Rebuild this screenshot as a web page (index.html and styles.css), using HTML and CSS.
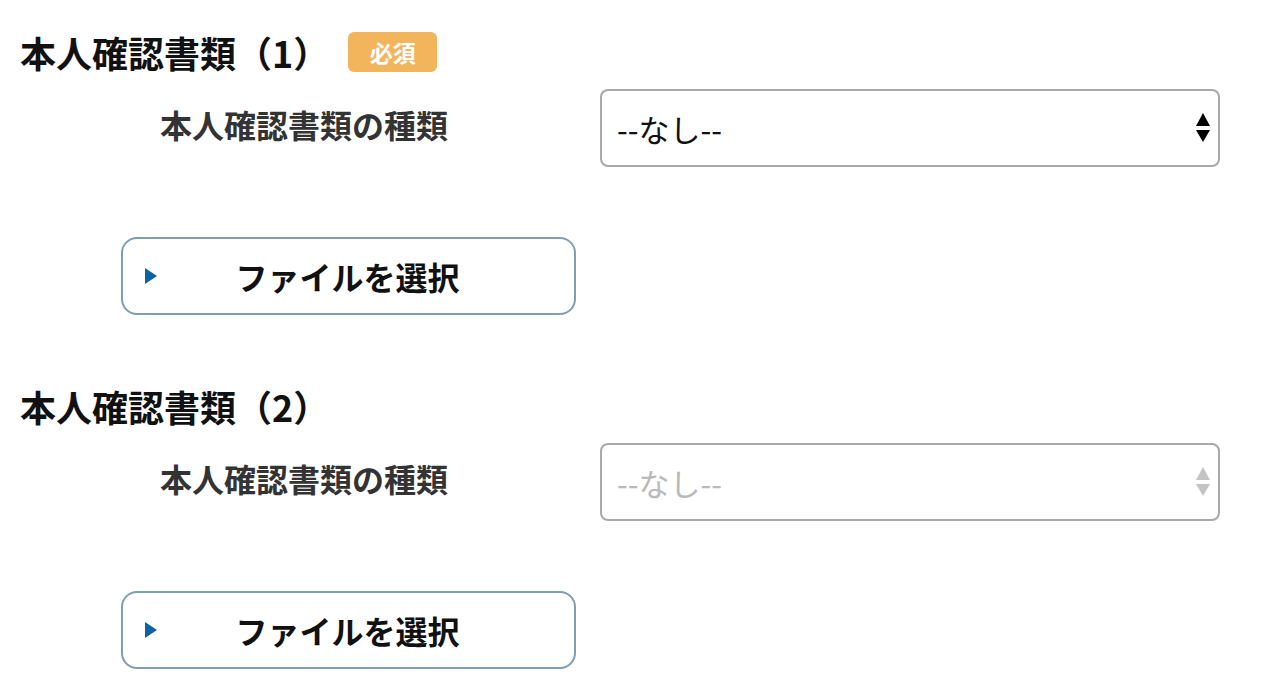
FILE: index.html
```html
<!DOCTYPE html>
<html lang="ja">
<head>
<meta charset="utf-8">
<title>本人確認書類</title>
<link rel="stylesheet" href="styles.css">
</head>
<body>
<div class="page">
  <section class="doc-section">
    <h2 class="doc-title">本人確認書類（1）<span class="badge">必須</span></h2>
    <div class="field-row">
      <label class="field-label">本人確認書類の種類</label>
      <div class="select-wrap">
        <div class="select">--なし--</div>
        <svg class="select-arrows" width="16" height="30" viewBox="0 0 16 30"><polygon points="8,0 15,13 1,13" fill="#000"/><polygon points="1,17 15,17 8,29" fill="#000"/></svg>
      </div>
    </div>
    <button class="file-btn" type="button">
      <svg class="file-btn-icon" width="12" height="16" viewBox="0 0 12 16"><polygon points="0,0 12,8 0,16" fill="#0b62a5"/></svg>
      <span class="file-btn-text">ファイルを選択</span>
      <span></span>
    </button>
  </section>
  <section class="doc-section">
    <h2 class="doc-title">本人確認書類（2）</h2>
    <div class="field-row">
      <label class="field-label">本人確認書類の種類</label>
      <div class="select-wrap">
        <div class="select disabled">--なし--</div>
        <svg class="select-arrows" width="16" height="30" viewBox="0 0 16 30"><polygon points="8,0 15,13 1,13" fill="#c4c4c4"/><polygon points="1,17 15,17 8,29" fill="#c4c4c4"/></svg>
      </div>
    </div>
    <button class="file-btn" type="button">
      <svg class="file-btn-icon" width="12" height="16" viewBox="0 0 12 16"><polygon points="0,0 12,8 0,16" fill="#0b62a5"/></svg>
      <span class="file-btn-text">ファイルを選択</span>
      <span></span>
    </button>
  </section>
</div>
</body>
</html>
```

FILE: styles.css
```css
html, body {
  margin: 0;
  padding: 0;
  background: #fff;
}
body {
  font-family: "Noto Sans CJK JP", "Noto Sans", sans-serif;
  color: #111;
}
.page {
  padding: 32px 20px 0 20px;
  display: flex;
  flex-direction: column;
  gap: 71px;
}
.doc-section {
  display: flex;
  flex-direction: column;
}
.doc-title {
  margin: 0;
  height: 40px;
  display: flex;
  align-items: center;
  font-size: 36px;
  font-weight: 700;
  line-height: 40px;
  color: #111;
}
.badge {
  margin-left: 19px;
  width: 89px;
  height: 40px;
  border-radius: 6px;
  background: #f3b55c;
  color: #fff;
  font-size: 23px;
  font-weight: 700;
  display: flex;
  align-items: center;
  justify-content: center;
  line-height: 1;
}
.field-row {
  margin-top: 17px;
  display: grid;
  grid-template-columns: 580px 620px;
  align-items: center;
}
.field-label {
  padding-left: 140px;
  font-size: 32px;
  font-weight: 700;
  color: #333;
  line-height: 1;
  margin-top: -8px;
}
.select-wrap {
  position: relative;
}
.select {
  box-sizing: border-box;
  height: 78px;
  border: 2px solid #a9a9a9;
  border-radius: 8px;
  padding-left: 15px;
  display: flex;
  align-items: center;
  font-size: 31px;
  color: #111;
}
.select.disabled {
  color: #b9b9b9;
}
.select-arrows {
  position: absolute;
  right: 9px;
  top: 24px;
}
.file-btn {
  margin-top: 70px;
  margin-left: 101px;
  box-sizing: border-box;
  width: 455px;
  height: 78px;
  border: 2px solid #7f9db4;
  border-radius: 16px;
  background: #fff;
  padding: 0 22px;
  display: grid;
  grid-template-columns: 1fr auto 1fr;
  align-items: center;
  font-family: "Noto Sans CJK JP", "Noto Sans", sans-serif;
  cursor: pointer;
}
.file-btn-icon {
  display: block;
}
.file-btn-text {
  font-size: 32px;
  font-weight: 700;
  color: #111;
  line-height: 1;
  margin-right: 2px;
}
```
